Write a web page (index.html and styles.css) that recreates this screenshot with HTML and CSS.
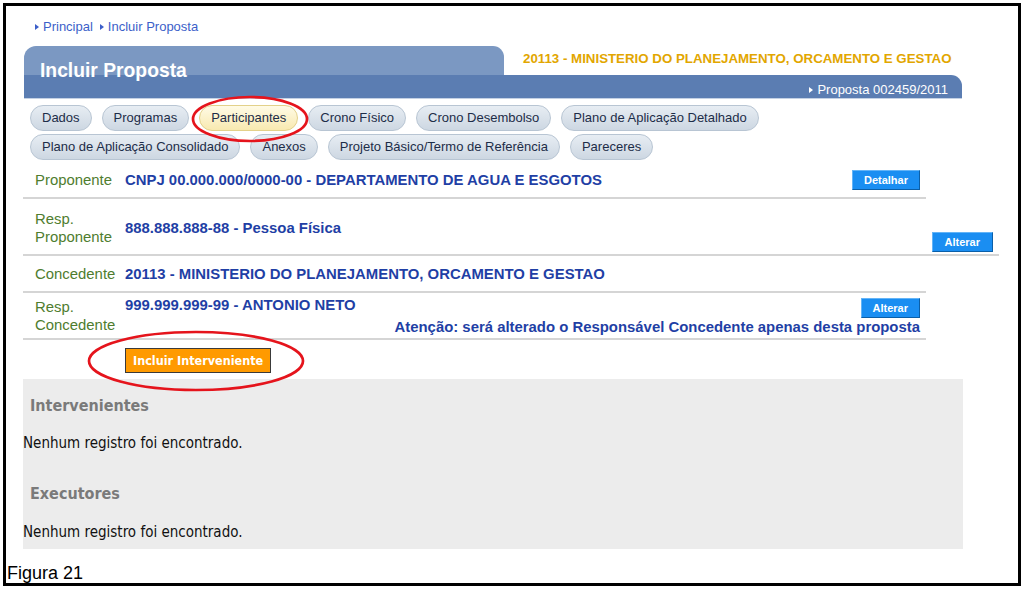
FILE: index.html
```html
<!DOCTYPE html>
<html lang="pt-BR">
<head>
<meta charset="utf-8">
<title>Incluir Proposta</title>
<link rel="stylesheet" href="styles.css">
</head>
<body>
<div class="frame">
  <div class="page">
    <nav class="crumbs">
      <a class="crumb">Principal</a>
      <a class="crumb">Incluir Proposta</a>
    </nav>
    <header class="head">
      <div class="head-top">
        <div class="head-tab"><h1>Incluir Proposta</h1></div>
        <div class="agency">20113 - MINISTERIO DO PLANEJAMENTO, ORCAMENTO E GESTAO</div>
      </div>
      <div class="head-bar"><span class="crumb">Proposta 002459/2011</span></div>
    </header>
    <div class="tabs">
      <span class="tab">Dados</span>
      <span class="tab">Programas</span>
      <span class="tab active">Participantes</span>
      <span class="tab">Crono Físico</span>
      <span class="tab">Crono Desembolso</span>
      <span class="tab">Plano de Aplicação Detalhado</span>
      <span class="tab">Plano de Aplicação Consolidado</span>
      <span class="tab">Anexos</span>
      <span class="tab">Projeto Básico/Termo de Referência</span>
      <span class="tab">Pareceres</span>
    </div>
    <div class="rows">
      <div class="row r1">
        <div class="lbl">Proponente</div>
        <div class="val">CNPJ 00.000.000/0000-00 - DEPARTAMENTO DE AGUA E ESGOTOS</div>
        <button class="btn">Detalhar</button>
      </div>
      <div class="row r2 wide">
        <div class="lbl">Resp.<br>Proponente</div>
        <div class="val">888.888.888-88 - Pessoa Física</div>
        <button class="btn low">Alterar</button>
      </div>
      <div class="row r3">
        <div class="lbl">Concedente</div>
        <div class="val">20113 - MINISTERIO DO PLANEJAMENTO, ORCAMENTO E GESTAO</div>
      </div>
      <div class="row r4">
        <div class="lbl">Resp.<br>Concedente</div>
        <div class="val-col">
          <div class="val-line">
            <span class="val">999.999.999-99 - ANTONIO NETO</span>
            <button class="btn top">Alterar</button>
          </div>
          <div class="warn">Atenção: será alterado o Responsável Concedente apenas desta proposta</div>
        </div>
      </div>
    </div>
    <button class="add">Incluir Interveniente</button>
    <section class="lists">
      <h3>Intervenientes</h3>
      <p class="empty first">Nenhum registro foi encontrado.</p>
      <h3 class="second">Executores</h3>
      <p class="empty">Nenhum registro foi encontrado.</p>
    </section>
  </div>
  <div class="caption">Figura 21</div>
</div>
<svg class="marks" width="1024" height="589" viewBox="0 0 1024 589">
  <ellipse cx="250" cy="119" rx="57" ry="22" fill="none" stroke="#e5141c" stroke-width="2.7"/>
  <ellipse cx="196" cy="361" rx="107" ry="29" fill="none" stroke="#e5141c" stroke-width="2.7"/>
</svg>
</body>
</html>
```
FILE: styles.css
```css
html, body {
  margin: 0;
  padding: 0;
}
body {
  position: relative;
  width: 1024px;
  height: 589px;
  overflow: hidden;
  background: #fff;
  font-family: "Liberation Sans", Arial, sans-serif;
  color: #000;
}
.frame {
  margin: 3px;
  width: 1012px;
  height: 577px;
  border: 3px solid #000;
  display: flex;
  flex-direction: column;
}
.page {
  padding-left: 17px;
}
.crumbs {
  margin-top: 13px;
  padding-left: 12px;
  display: flex;
  gap: 7px;
  height: 16px;
  font-size: 13px;
  line-height: 16px;
  color: #3c5fc9;
}
.crumb::before {
  content: "";
  display: inline-block;
  width: 0;
  height: 0;
  border-left: 4px solid currentColor;
  border-top: 3px solid transparent;
  border-bottom: 3px solid transparent;
  margin-right: 4px;
  vertical-align: 1px;
}
.head {
  margin-top: 11px;
  margin-left: 1px;
  width: 938px;
}
.head-top {
  display: flex;
  height: 29px;
}
.head-tab {
  width: 480px;
  flex: none;
  box-sizing: border-box;
  padding-left: 16px;
  background: #7b98c2;
  border-radius: 12px 11px 0 0;
}
.head-tab h1 {
  margin: 0;
  padding-top: 14px;
  font-size: 19.3px;
  line-height: 22px;
  font-weight: bold;
  color: #fff;
  white-space: nowrap;
}
.agency {
  margin-left: 19px;
  padding-top: 5px;
  font-size: 13.3px;
  line-height: 16px;
  font-weight: bold;
  color: #e2a600;
  white-space: nowrap;
}
.head-bar {
  height: 23px;
  box-sizing: border-box;
  background: #5b7db2;
  border-radius: 0 11px 0 0;
  box-shadow: 0 1px 0 #c4d1e4;
  display: flex;
  justify-content: flex-end;
  align-items: center;
  padding: 5px 14px 0 0;
  font-size: 13px;
  color: #fff;
}
.tabs {
  margin-top: 7px;
  margin-left: 7px;
  width: 900px;
  display: flex;
  flex-wrap: wrap;
  column-gap: 10px;
  row-gap: 3px;
}
.tab {
  height: 26px;
  box-sizing: border-box;
  padding: 0 11px;
  border: 1px solid #b8c5d3;
  border-radius: 13px;
  background: linear-gradient(#e7edf3, #cdd7e2);
  font-size: 13px;
  line-height: 24px;
  color: #1d2d48;
  white-space: nowrap;
}
.tab.active {
  background: linear-gradient(#fffbe6, #f8e9b0);
  border-color: #e3d18a;
}
.rows {
  margin-top: 2px;
}
.row {
  display: flex;
  align-items: center;
  width: 903px;
  box-sizing: border-box;
  padding-right: 6px;
  border-bottom: 2px solid #d5d5d5;
}
.row.wide {
  width: 976px;
}
.r1, .r3 { height: 37px; }
.r2 { height: 57px; padding-top: 2px; }
.r4 { height: 47px; }
.lbl {
  width: 102px;
  flex: none;
  box-sizing: border-box;
  padding-left: 12px;
  font-size: 14.9px;
  line-height: 18px;
  color: #4f7d2f;
}
.val {
  flex: 1;
  font-size: 14.9px;
  line-height: 18px;
  font-weight: bold;
  color: #1f3fa5;
  white-space: nowrap;
}
.btn {
  flex: none;
  height: 20px;
  padding: 0 12px;
  margin: 0;
  border: 1px solid;
  border-color: #63b4f7 #0b5fa8 #0b5fa8 #63b4f7;
  background: #1a8ef2;
  color: #fff;
  font-family: "Liberation Sans", Arial, sans-serif;
  font-size: 11px;
  font-weight: bold;
  line-height: 18px;
}
.btn.low {
  align-self: flex-end;
  margin-bottom: 2px;
}
.btn.top {
  margin-top: 2px;
  padding: 0 11px;
}
.r1 .btn {
  padding: 0 11px;
}
.val-col {
  flex: 1;
  align-self: flex-start;
  display: flex;
  flex-direction: column;
  padding-top: 3px;
}
.val-line {
  display: flex;
  align-items: flex-start;
}
.warn {
  text-align: right;
  font-size: 14.9px;
  line-height: 18px;
  font-weight: bold;
  color: #1f3fa5;
  white-space: nowrap;
}
.add {
  display: block;
  margin: 8px 0 0 102px;
  height: 25px;
  padding: 0 7px;
  border: 1px solid #3a3a3a;
  background: #ff9a00;
  color: #fff;
  font-family: "DejaVu Sans Condensed", "DejaVu Sans", sans-serif;
  font-stretch: condensed;
  font-size: 12.5px;
  font-weight: bold;
  line-height: 23px;
}
.lists {
  margin-top: 6px;
  width: 940px;
  height: 170px;
  box-sizing: border-box;
  padding-top: 17px;
  background: #ececec;
  font-family: "DejaVu Sans Condensed", "DejaVu Sans", sans-serif;
  font-stretch: condensed;
}
.lists h3 {
  margin: 0 0 0 7px;
  font-size: 16px;
  line-height: 20px;
  font-weight: bold;
  color: #7a7a7a;
}
.lists h3.second {
  margin-top: 32px;
}
.empty {
  margin: 19px 0 0;
  font-size: 15px;
  line-height: 18px;
  color: #111;
}
.empty.first {
  margin-top: 18px;
}
.caption {
  margin: 14px 0 0 1px;
  font-size: 18px;
  line-height: 20px;
}
.marks {
  position: absolute;
  top: 0;
  left: 0;
  pointer-events: none;
}
```
